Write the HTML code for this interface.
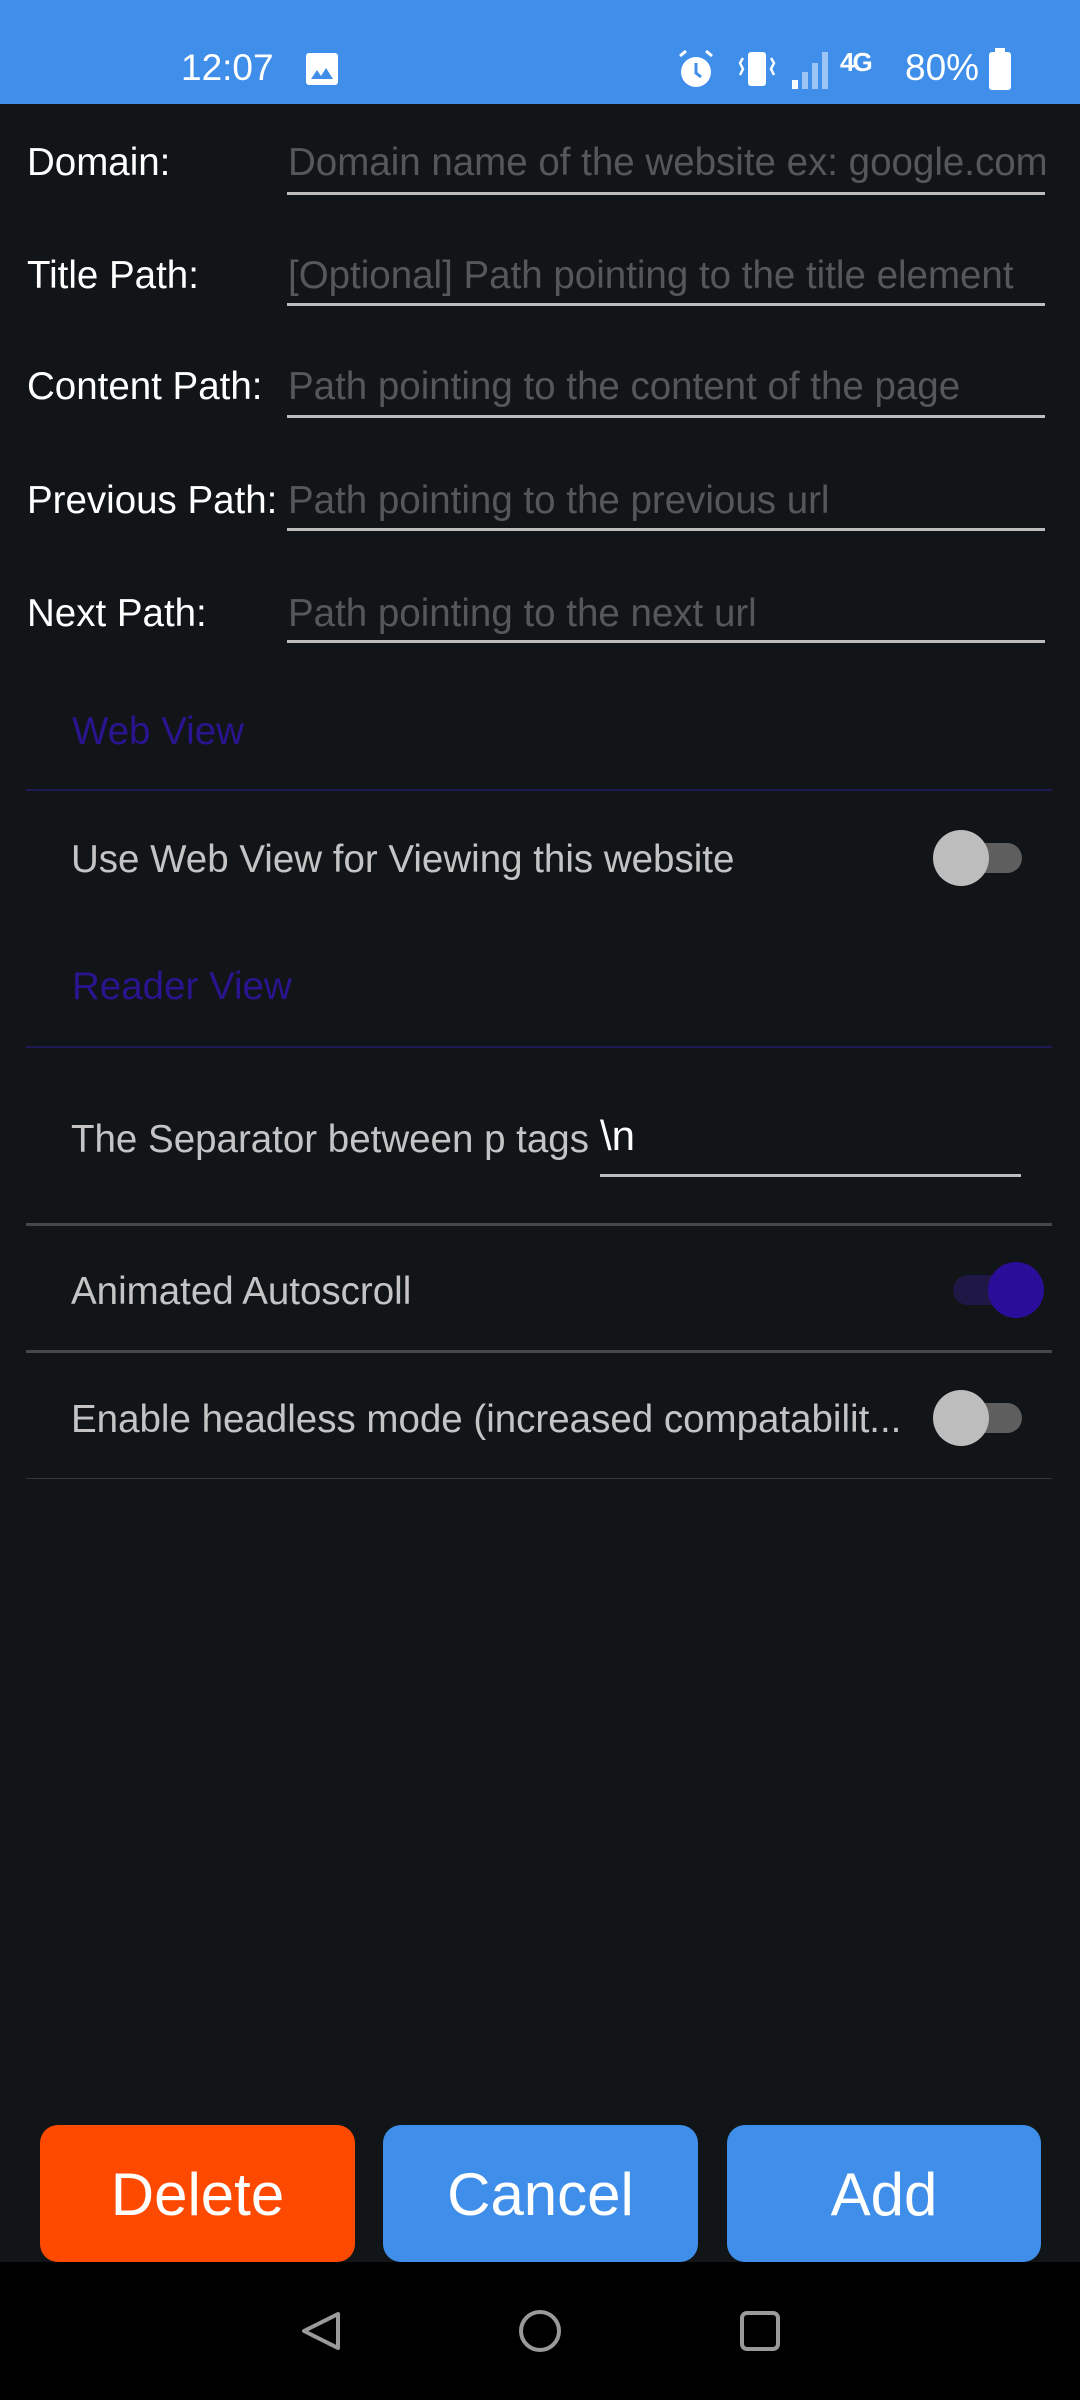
<!DOCTYPE html>
<html><head><meta charset="utf-8"><style>
*{margin:0;padding:0;box-sizing:border-box}
body{width:1080px;height:2400px;background:#121517;position:relative;overflow:hidden;font-family:"Liberation Sans",sans-serif}
.t{position:absolute;height:60px;line-height:60px;white-space:nowrap}
.lab{left:27px;color:#fff;font-size:38.5px}
.ph{left:288px;color:#55585a;font-size:38.5px;width:757px;overflow:hidden}
.ul{position:absolute;left:287px;width:758px;height:3px;background:#bdbdbd}
.hdr{left:72px;color:#2a148f;font-size:38.5px}
.itm{left:71px;color:#c4c4c4;font-size:38.5px}
.dv{position:absolute;left:26px;width:1026px}
.sw{position:absolute}
.btn{position:absolute;top:2125px;height:137px;border-radius:18px;color:#fff;font-size:60px;text-align:center;line-height:140px}
</style></head><body>
<div style="position:absolute;left:0;top:0;width:1080px;height:104px;background:#3f8fea"></div>
<div class="t" style="left:181px;top:38px;color:#fff;font-size:37px;">12:07</div>
<svg style="position:absolute;left:305px;top:52px" width="34" height="34" viewBox="0 0 34 34"><rect x="1" y="1" width="32" height="32" rx="3" fill="#fff"/><path d="M6 27 L12 18 L16 24 L21 16 L28 27Z" fill="#3f8fea"/></svg>
<svg style="position:absolute;left:676px;top:48px" width="40" height="42" viewBox="0 0 40 42"><circle cx="20" cy="24" r="15" fill="#fff"/><path d="M4 8 L10 3 M36 8 L30 3" stroke="#fff" stroke-width="3"/><path d="M20 15 V25 L25 29" stroke="#3f8fea" stroke-width="3" fill="none"/></svg>
<svg style="position:absolute;left:738px;top:50px" width="38" height="38" viewBox="0 0 38 38"><rect x="10" y="2" width="18" height="34" rx="3" fill="#fff"/><path d="M5 8 L2 13 L5 19 L2 25 M33 8 L36 13 L33 19 L36 25" stroke="#fff" stroke-width="2.5" fill="none"/></svg>
<svg style="position:absolute;left:790px;top:48px" width="48" height="42" viewBox="0 0 48 42"><rect x="2" y="32" width="6" height="9" fill="#fff"/><rect x="12" y="24" width="6" height="17" fill="#9cc4f5"/><rect x="22" y="15" width="6" height="26" fill="#9cc4f5"/><rect x="32" y="4" width="6" height="37" fill="#9cc4f5"/></svg>
<div class="t" style="left:840px;top:32px;color:#fff;font-size:26px;font-weight:bold;letter-spacing:-2px">4G</div>
<div class="t" style="left:905px;top:38px;color:#fff;font-size:37px;">80%</div>
<svg style="position:absolute;left:988px;top:48px" width="24" height="42" viewBox="0 0 24 42"><rect x="7" y="0" width="10" height="5" fill="#fff"/><rect x="1" y="4" width="22" height="38" rx="3" fill="#fff"/></svg>

<div class="t lab" style="top:133px">Domain:</div><div class="t ph" style="top:133px">Domain name of the website ex: google.com</div><div class="ul" style="top:192px"></div>
<div class="t lab" style="top:246px">Title Path:</div><div class="t ph" style="top:246px">[Optional] Path pointing to the title element</div><div class="ul" style="top:303px"></div>
<div class="t lab" style="top:357px">Content Path:</div><div class="t ph" style="top:357px">Path pointing to the content of the page</div><div class="ul" style="top:415px"></div>
<div class="t lab" style="top:471px">Previous Path:</div><div class="t ph" style="top:471px">Path pointing to the previous url</div><div class="ul" style="top:528px"></div>
<div class="t lab" style="top:584px">Next Path:</div><div class="t ph" style="top:584px">Path pointing to the next url</div><div class="ul" style="top:640px"></div>

<div class="t hdr" style="top:702px">Web View</div>
<div class="dv" style="top:789px;height:2px;background:#1e1a55"></div>
<div class="t itm" style="top:830px">Use Web View for Viewing this website</div>
<div class="sw" style="left:958px;top:843px;width:64px;height:30px;border-radius:15px;background:#5e5e5e"></div>
<div class="sw" style="left:933px;top:830px;width:56px;height:56px;border-radius:50%;background:#bdbdbd"></div>

<div class="t hdr" style="top:957px">Reader View</div>
<div class="dv" style="top:1046px;height:2px;background:#1e1a55"></div>
<div class="t itm" style="top:1110px">The Separator between p tags</div>
<div class="t" style="left:600px;top:1106px;color:#fff;font-size:42px">\n</div>
<div class="ul" style="left:600px;width:421px;top:1174px"></div>
<div class="dv" style="top:1223px;height:3px;background:#44484a"></div>
<div class="t itm" style="top:1262px">Animated Autoscroll</div>
<div class="sw" style="left:953px;top:1275px;width:64px;height:30px;border-radius:15px;background:#1f1745"></div>
<div class="sw" style="left:988px;top:1262px;width:56px;height:56px;border-radius:50%;background:#2a0e9a"></div>
<div class="dv" style="top:1350px;height:3px;background:#44484a"></div>
<div class="t itm" style="top:1390px">Enable headless mode (increased compatabilit...</div>
<div class="sw" style="left:958px;top:1403px;width:64px;height:30px;border-radius:15px;background:#5e5e5e"></div>
<div class="sw" style="left:933px;top:1390px;width:56px;height:56px;border-radius:50%;background:#bdbdbd"></div>
<div class="dv" style="top:1478px;height:1px;background:#34383a"></div>

<div class="btn" style="left:40px;width:315px;background:#fe4a00">Delete</div>
<div class="btn" style="left:383px;width:315px;background:#3f8fea">Cancel</div>
<div class="btn" style="left:727px;width:314px;background:#3f8fea">Add</div>

<div style="position:absolute;left:0;top:2262px;width:1080px;height:138px;background:#000"></div>
<svg style="position:absolute;left:0;top:2262px" width="1080" height="138" viewBox="0 0 1080 138"><path d="M338 52 L304 69 L338 86Z" fill="none" stroke="#9a9a9a" stroke-width="4" stroke-linejoin="round"/><circle cx="540" cy="69" r="19" fill="none" stroke="#9a9a9a" stroke-width="4"/><rect x="742" y="51" width="36" height="36" rx="5" fill="none" stroke="#9a9a9a" stroke-width="4"/></svg>
</body></html>
